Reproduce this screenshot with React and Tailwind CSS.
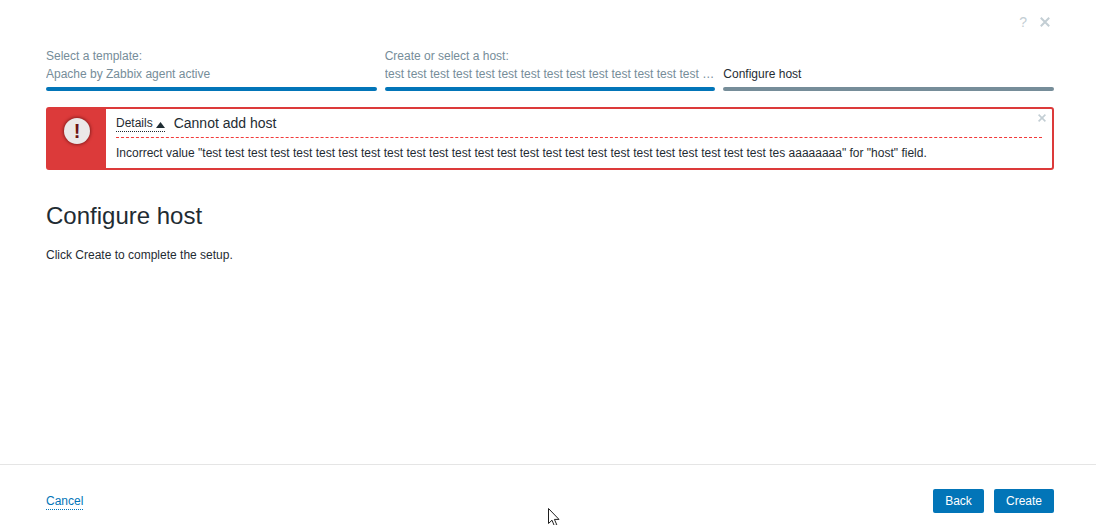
export default function App() {
  return (
    <div className="relative flex h-[525px] w-[1096px] flex-col overflow-hidden bg-white font-['Liberation_Sans',Arial,sans-serif] text-[12px] leading-[18px] text-[#1f2c33]">
      <div className="flex flex-1 flex-col pl-[46px] pr-[42px]">
        <div className="flex h-[47px] items-start justify-end gap-[13px] pt-[14px] pr-[4px]">
          <span className="text-[14px] leading-[16px] text-[#c3ced4]">?</span>
          <svg width="10" height="10" viewBox="0 0 10 10" className="mt-[3px]">
            <path d="M0.8 0.8 L9.2 9.2 M9.2 0.8 L0.8 9.2" stroke="#c3ced4" strokeWidth="2" />
          </svg>
        </div>
        <div className="flex w-[1008px] gap-[8px]">
          <div className="min-w-0 flex-1">
            <div className="text-[#768d99]">Select a template:</div>
            <div className="truncate text-[#768d99]">Apache by Zabbix agent active</div>
            <div className="mt-[4px] h-[4px] rounded-[2px] bg-[#0275b8]" />
          </div>
          <div className="min-w-0 flex-1">
            <div className="text-[#768d99]">Create or select a host:</div>
            <div className="truncate text-[#768d99]">test test test test test test test test test test test test test test test</div>
            <div className="mt-[4px] h-[4px] rounded-[2px] bg-[#0275b8]" />
          </div>
          <div className="min-w-0 flex-1">
            <div className="h-[18px]" />
            <div className="truncate">Configure host</div>
            <div className="mt-[4px] h-[4px] rounded-[2px] bg-[#768d99]" />
          </div>
        </div>

        <div className="relative mt-[16px] flex h-[63px] w-[1008px] rounded-[3px] border-2 border-[#dc3a3a]">
          <div className="flex w-[58px] justify-center bg-[#dc3a3a] pt-[9px]">
            <div className="flex h-[26px] w-[26px] items-center justify-center rounded-full bg-[#ebe8e8] text-[20px] font-bold leading-none text-[#6b1414] shadow-[0_0_3px_1px_#8f2020]">!</div>
          </div>
          <div className="flex-1 px-[10px]">
            <div className="flex h-[29px] items-start border-b border-dashed border-[#f23a3a] pt-[5px]">
              <span className="mt-[1px] flex items-center border-b border-dotted border-[#1f2c33] leading-[16px]">
                Details
                <svg width="9" height="6" viewBox="0 0 9 6" className="ml-[3px] mt-[3px]">
                  <path d="M4.5 0 L9 6 L0 6 Z" fill="#1f2c33" />
                </svg>
              </span>
              <span className="ml-[9px] text-[14px] leading-[18px]">Cannot add host</span>
            </div>
            <div className="pt-[6px]">Incorrect value "test test test test test test test test test test test test test test test test test test test test test test test test test tes aaaaaaaa" for "host" field.</div>
          </div>
          <svg width="8" height="8" viewBox="0 0 8 8" className="absolute right-[6px] top-[5px]">
            <path d="M0.6 0.6 L7.4 7.4 M7.4 0.6 L0.6 7.4" stroke="#c3ced4" strokeWidth="1.6" />
          </svg>
        </div>

        <h1 className="mt-[32px] text-[24px] font-normal leading-[28px]">Configure host</h1>
        <p className="mt-[16px]">Click Create to complete the setup.</p>
      </div>

      <div className="flex h-[61px] items-start justify-between border-t border-[#e5e5e5] pl-[46px] pr-[42px] pt-[24px]">
        <a className="mt-[5px] border-b border-dotted border-[#0275b8] leading-[15px] text-[#0275b8]">Cancel</a>
        <div className="flex gap-[10px]">
          <button className="h-[24px] w-[51px] rounded-[2px] bg-[#0275b8] text-center text-[12px] text-white">Back</button>
          <button className="h-[24px] w-[60px] rounded-[2px] bg-[#0275b8] text-center text-[12px] text-white">Create</button>
        </div>
      </div>

      <svg width="13" height="19" viewBox="0 0 13 19" className="absolute left-[548px] top-[508px]">
        <path d="M0.5 0.5 L0.5 15.5 L4 12.2 L6.3 17.8 L8.8 16.8 L6.4 11.4 L11 11.4 Z" fill="#fff" stroke="#1f1f1f" strokeWidth="1" />
      </svg>
    </div>
  );
}
